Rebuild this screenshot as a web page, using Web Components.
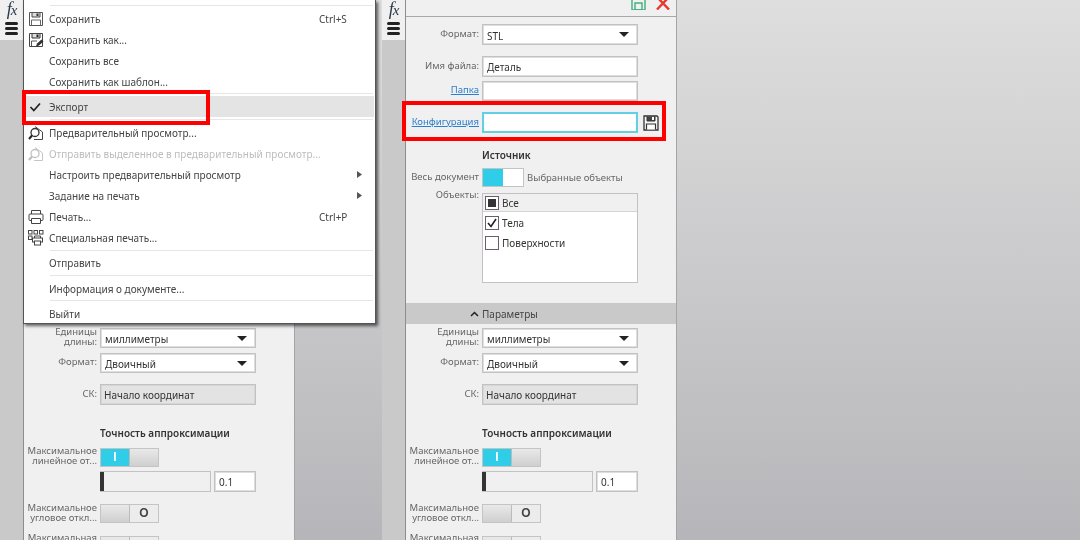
<!DOCTYPE html>
<html lang="ru">
<head>
<meta charset="utf-8">
<title>Экспорт</title>
<style>
  html, body { margin: 0; height: 540px; overflow: hidden; }
  body {
    display: flex;
    font: 10px "Noto Sans", "Open Sans", sans-serif;
    color: #3c3c3c;
    background: linear-gradient(#dedede, #b6b6ba);
  }
  svg { display: block; }
</style>
</head>
<body>

<cad-pane>
  <div slot="top" style="height:324px"></div>
  <export-params></export-params>
  <red-mark slot="over" style="--x:22px;--y:90px;--w:188px;--h:35px"></red-mark>
  <cad-menu slot="over">
    <menu-item label="Сохранить" keys="Ctrl+S"><file-icon kind="save"></file-icon></menu-item>
    <menu-item label="Сохранить как..."><file-icon kind="saveas"></file-icon></menu-item>
    <menu-item label="Сохранить все"></menu-item>
    <menu-item label="Сохранить как шаблон..."></menu-item>
    <menu-sep style="--t:1px;--b:2px"></menu-sep>
    <menu-item label="Экспорт" active><file-icon kind="check"></file-icon></menu-item>
    <menu-sep style="--t:2px;--b:2px"></menu-sep>
    <menu-item label="Предварительный просмотр..."><file-icon kind="preview"></file-icon></menu-item>
    <menu-item label="Отправить выделенное в предварительный просмотр..." disabled><file-icon kind="preview" style="opacity:.3"></file-icon></menu-item>
    <menu-item label="Настроить предварительный просмотр" sub></menu-item>
    <menu-item label="Задание на печать" sub></menu-item>
    <menu-item label="Печать..." keys="Ctrl+P"><file-icon kind="print"></file-icon></menu-item>
    <menu-item label="Специальная печать..."><file-icon kind="special"></file-icon></menu-item>
    <menu-sep style="--t:2px;--b:1px"></menu-sep>
    <menu-item label="Отправить"></menu-item>
    <menu-sep style="--t:2px;--b:2px"></menu-sep>
    <menu-item label="Информация о документе..."></menu-item>
    <menu-sep style="--t:1px;--b:2px"></menu-sep>
    <menu-item label="Выйти"></menu-item>
  </cad-menu>
</cad-pane>

<cad-pane>
  <pane-head slot="top"></pane-head>
  <form-row slot="top" label="Формат:" style="margin-top:7px"><drop-select>STL</drop-select></form-row>
  <form-row slot="top" label="Имя файла:" style="margin-top:11px"><text-box>Деталь</text-box></form-row>
  <form-row slot="top" label="Папка" link style="margin-top:4px;--h:20px;--box:20px"><text-box></text-box></form-row>
  <form-row slot="top" label="Конфигурация" link style="margin-top:11px">
    <text-box focused></text-box>
    <file-icon slot="after" kind="disk" style="margin:0 0 0 2px"></file-icon>
  </form-row>
  <sect-title slot="top" style="margin-top:14px">Источник</sect-title>
  <form-row slot="top" label="Весь документ" style="margin-top:5px;--h:19px">
    <div style="display:flex;align-items:center;gap:3px;white-space:nowrap;color:#666;font-size:9.500px">
      <flip-toggle wide></flip-toggle>Выбранные объекты
    </div>
  </form-row>
  <form-row slot="top" label="Объекты:" style="margin-top:6px;--h:90px;--align:start;--lift:-3px">
    <object-list>
      <object-row state="all" head>Все</object-row>
      <object-row state="on">Тела</object-row>
      <object-row>Поверхности</object-row>
    </object-list>
  </form-row>
  <section-bar slot="top" style="margin-top:20px">Параметры</section-bar>
  <export-params></export-params>
  <red-mark slot="over" style="--x:20px;--y:101px;--w:264px;--h:40px"></red-mark>
</cad-pane>

<script>
  // small helper, every element here is just a template + an open shadow root
  function shadow(el, html) {
    el.attachShadow({ mode: 'open' }).innerHTML = html;
    return el.shadowRoot;
  }

  class CadPane extends HTMLElement {
    constructor() {
      super();
      shadow(this, `
        <style>
          :host { display: flex; position: relative; flex: none; width: 382px; height: 540px; overflow: visible; filter: blur(.3px); }
          .side { flex: none; width: 23px; background: #c9c9c9; }
          .tools { height: 40px; background: #f0f0f0; display: flex; flex-direction: column; align-items: center; }
          .fx { height: 20px; font: italic 18px/19px "Liberation Serif", serif; color: #2b3a4a; letter-spacing: -1px; }
          .fx span { font-size: 15px; }
          .bars { display: flex; flex-direction: column; gap: 2px; margin-top: 2px; }
          .bars i { display: block; width: 13px; height: 3px; border-radius: 1.5px; background: #222; }
          .panel {
            flex: none; width: 270px; height: 540px; overflow: hidden; background: #f0f0f0;
            border-left: 1px solid #8d8d8d; border-right: 1px solid #a5a5a5;
          }
        </style>
        <div class="side">
          <div class="tools">
            <div class="fx">f<span>x</span></div>
            <div class="bars"><i></i><i></i><i></i></div>
          </div>
        </div>
        <div class="panel"><slot name="top"></slot><slot></slot></div>
        <slot name="over"></slot>`);
    }
  }

  class PaneHead extends HTMLElement {
    constructor() {
      super();
      shadow(this, `
        <style>
          :host { display: flex; height: 16px; border-bottom: 1px solid #a8a8a8; justify-content: flex-end; align-items: flex-start; gap: 10px; padding-right: 6px; overflow: hidden; }
        </style>
        <svg width="15" height="10" viewBox="0 0 15 10" fill="none" stroke="#3fae7c" stroke-width="1.4"><path d="M1 -3H14V10H1Z"/><path d="M4 3H11V10H4Z"/></svg>
        <svg width="14" height="10" viewBox="0 0 14 10" fill="none" stroke="#e8392e" stroke-width="2.4"><path d="M1 -3 13 9.500M13 -3 1 9.500"/></svg>`);
    }
  }

  class CadMenu extends HTMLElement {
    constructor() {
      super();
      shadow(this, `
        <style>
          :host {
            display: block; position: absolute; left: 23px; top: 0; width: 353px; height: 324px;
            padding-top: 8px; box-sizing: border-box; background: #fff;
            border: 1px solid #555; border-top: 0;
            box-shadow: 2px 2px 3px rgba(0, 0, 0, .6);
          }
          .topline { position: absolute; left: 26px; right: 2px; top: 5px; height: 1px; background: #e6e6e6; }
        </style>
        <div class="topline"></div>
        <slot></slot>`);
    }
  }

  class MenuItem extends HTMLElement {
    constructor() {
      super();
      const keys = this.getAttribute('keys') || '';
      const arrow = this.hasAttribute('sub') ? '<svg width="5" height="7"><path d="M0 0 5 3.500 0 7Z" fill="#555"/></svg>' : '';
      shadow(this, `
        <style>
          :host { display: flex; align-items: center; height: 21px; color: #444; }
          :host([disabled]) { color: #bdbdbd; }
          :host([active]) { background: #e4e4e4; margin: 0 1px; }
          .ico { flex: none; box-sizing: border-box; width: 25px; padding-right: 2px; display: flex; justify-content: center; }
          :host([active]) .ico { width: 24px; }
          .txt { flex: none; width: 270px; white-space: nowrap; }
          .keys { flex: none; width: 38px; }
          .arr { flex: none; width: 5px; margin-bottom: 2px; }
        </style>
        <div class="ico"><slot></slot></div>
        <div class="txt">${this.getAttribute('label')}</div>
        <div class="keys">${keys}</div>
        <div class="arr">${arrow}</div>`);
    }
  }

  class MenuSep extends HTMLElement {
    constructor() {
      super();
      shadow(this, `
        <style>
          :host { display: block; height: 1px; background: #e6e6e6; margin: var(--t) 2px var(--b) 26px; }
        </style>`);
    }
  }

  const ICONS = {
    save: '<path d="M1.500 1.500H14.500V14.500H1.500Z" fill="#fff" stroke="#555"/><path d="M4 2V6H12V2" fill="#ddd" stroke="#444"/><rect x="8.500" y="2.500" width="2" height="2.500" fill="#333"/><path d="M3.500 14V9H12.500V14" fill="none" stroke="#666"/>',
    saveas: '<path d="M1.500 1.500H14.500V14.500H1.500Z" fill="#fff" stroke="#444"/><path d="M4 2V6H12V2" fill="#ddd" stroke="#333"/><rect x="8.500" y="2.500" width="2" height="2.500" fill="#222"/><path d="M3.500 14V9H9" fill="none" stroke="#555"/><path d="M8 14.500 9 11.500 13.500 7.500 15.500 9.500 11 13.500Z" fill="#333"/>',
    check: '<path d="M2.500 8 5.800 11.500 12 4.500" fill="none" stroke="#222" stroke-width="1.700"/>',
    preview: '<path d="M7 1.500 14.500 7V14.500H6" fill="#fff" stroke="#444"/><circle cx="7" cy="7.500" r="4" fill="#fff" stroke="#333" stroke-width="1.300"/><path d="M4 10.500 1 14" stroke="#222" stroke-width="2"/>',
    print: '<path d="M3.500 5V1.500H12.500V5" fill="none" stroke="#444"/><rect x="1" y="5" width="14" height="6.500" rx="1" fill="#fff" stroke="#444"/><path d="M3.500 9.500H12.500V14.500H3.500Z" fill="#fff" stroke="#444"/>',
    special: '<g fill="none" stroke="#444"><rect x=".5" y=".5" width="3.500" height="3.500"/><rect x="6" y=".5" width="3.500" height="3.500"/><rect x="11.500" y=".5" width="3.500" height="3.500"/><rect x=".5" y="6" width="3.500" height="3.500"/><path d="M6.500 8V6H12.500V8"/><rect x="4.500" y="8" width="10" height="4" fill="#fff"/><rect x="6.500" y="11" width="6" height="4" fill="#fff"/></g>',
    disk: '<path d="M1 1H14L15 2V15H1Z" fill="#f7f7f7" stroke="#333" stroke-width="1.300"/><path d="M4 1.500V6H12V1.500" fill="#444" stroke="#333"/><rect x="9" y="2" width="2" height="3" fill="#fff"/><path d="M3.500 14.500V9H12.500V14.500" fill="#fff" stroke="#333" stroke-width="1.200"/>'
  };

  class FileIcon extends HTMLElement {
    constructor() {
      super();
      shadow(this, `
        <style>:host { display: block; width: 16px; height: 16px; }</style>
        <svg width="16" height="16" viewBox="0 0 16 16">${ICONS[this.getAttribute('kind')]}</svg>`);
    }
  }

  class FormRow extends HTMLElement {
    constructor() {
      super();
      const text = this.getAttribute('label') || '';
      const label = this.hasAttribute('link') ? `<a href="#">${text}</a>` : text;
      shadow(this, `
        <style>
          :host { display: grid; grid-template-columns: 73px 156px auto; column-gap: 3px; height: var(--h, 21px); align-items: center; }
          .lab { justify-self: end; align-self: var(--align, center); text-align: right; white-space: pre-line; font-size: 9.500px; color: #666; line-height: 10px; position: relative; top: var(--lift, -1px); }
          a { color: #2a7fd0; }
        </style>
        <div class="lab">${label}</div>
        <div class="val"><slot></slot></div>
        <slot name="after"></slot>`);
    }
  }

  const BOX = `
    :host { display: block; box-sizing: border-box; height: var(--box, 21px); border: 1px solid #c2c2c2; background: #fff; color: #333; padding: 0 4px; line-height: 20px; white-space: nowrap; outline: 1px solid #dedede; outline-offset: -2px; }`;

  class TextBox extends HTMLElement {
    constructor() {
      super();
      shadow(this, `
        <style>${BOX}
          :host([focused]) { border: 2px solid #62d0e2; outline: 0; }
          :host([grey]) { background: #e3e3e3; padding-left: 3px; outline-color: #d6d6d6; }
        </style>
        <slot></slot>`);
    }
  }

  class DropSelect extends HTMLElement {
    constructor() {
      super();
      shadow(this, `
        <style>${BOX}
          :host { display: flex; align-items: center; justify-content: space-between; padding-right: 8px; }
          span { position: relative; top: 1px; }
          i { width: 0; height: 0; border: 5px solid transparent; border-top: 5px solid #222; border-bottom: 0; }
        </style>
        <span><slot></slot></span><i></i>`);
    }
  }

  class FlipToggle extends HTMLElement {
    constructor() {
      super();
      const on = this.getAttribute('mark') === 'I';
      const off = this.getAttribute('mark') === 'O';
      shadow(this, `
        <style>
          :host { display: flex; flex: none; box-sizing: border-box; width: 59px; height: 19px; border: 1px solid #c4c4c4; }
          :host([wide]) { width: 42px; background: #fff; }
          div { flex: 1; display: flex; align-items: center; justify-content: center; font: bold 12px "Liberation Sans", sans-serif; }
          .a { background: ${on || this.hasAttribute('wide') ? '#2fcde8' : 'linear-gradient(#e9e9e9, #cfcfcf)'}; color: #fff; }
          .b { background: ${off ? '#ececec' : this.hasAttribute('wide') ? '#fff' : 'linear-gradient(#e9e9e9, #cfcfcf)'}; color: #444; border-left: ${this.hasAttribute('wide') ? 0 : '1px solid #bbb'}; }
        </style>
        <div class="a">${on ? 'I' : ''}</div><div class="b">${off ? 'O' : ''}</div>`);
    }
  }

  class ObjectList extends HTMLElement {
    constructor() {
      super();
      shadow(this, `
        <style>
          :host { display: block; box-sizing: border-box; height: 90px; border: 1px solid #c2c2c2; background: #fff; }
        </style>
        <slot></slot>`);
    }
  }

  class ObjectRow extends HTMLElement {
    constructor() {
      super();
      const state = this.getAttribute('state');
      const mark = state === 'all' ? '<i></i>'
        : state === 'on' ? '<svg width="10" height="10"><path d="M1 5 4 8.500 9 1" fill="none" stroke="#222" stroke-width="1.600"/></svg>' : '';
      shadow(this, `
        <style>
          :host { display: flex; align-items: center; gap: 3px; height: 20px; padding-left: 2px; color: #333; }
          :host([head]) { box-sizing: border-box; height: 18px; background: #f0f0f0; border-bottom: 1px solid #d4d4d4; margin-bottom: 1px; }
          b { box-sizing: border-box; width: 14px; height: 14px; border: 1px solid #6a5d6c; background: #fff; display: flex; align-items: center; justify-content: center; }
          i { width: 8px; height: 8px; background: #333; }
        </style>
        <b>${mark}</b><span><slot></slot></span>`);
    }
  }

  class SectTitle extends HTMLElement {
    constructor() {
      super();
      shadow(this, `
        <style>
          :host { display: block; height: 16px; padding-left: 76px; line-height: 16px; font-weight: 600; color: #333; white-space: nowrap; }
        </style>
        <slot></slot>`);
    }
  }

  class SectionBar extends HTMLElement {
    constructor() {
      super();
      shadow(this, `
        <style>
          :host { display: flex; align-items: center; height: 21px; background: #c9c9c9; padding-left: 64px; color: #444; gap: 3px; }
        </style>
        <svg width="9" height="6"><path d="M1 5 4.500 1.500 8 5" fill="none" stroke="#222" stroke-width="1.500"/></svg>
        <slot></slot>`);
    }
  }

  class SliderField extends HTMLElement {
    constructor() {
      super();
      shadow(this, `
        <style>
          :host { display: flex; gap: 3px; }
          .track { box-sizing: border-box; width: 111px; height: 21px; border: 1px solid #c2c2c2; border-left: 0; background: #f0f0f0; }
          .track i { display: block; width: 4px; height: 100%; background: #333; }
          text-box { width: 42px; }
        </style>
        <div class="track"><i></i></div><text-box>0.1</text-box>`);
    }
  }

  // the same parameter block sits in both panes
  class ExportParams extends HTMLElement {
    constructor() {
      super();
      shadow(this, `
        <style>
          :host { display: block; }
        </style>
        <form-row label="Единицы&#10;длины:" style="margin-top:4px;--h:20px;--box:20px"><drop-select>миллиметры</drop-select></form-row>
        <form-row label="Формат:" style="margin-top:5px;--h:20px;--box:20px"><drop-select>Двоичный</drop-select></form-row>
        <form-row label="СК:" style="margin-top:11px"><text-box grey>Начало координат</text-box></form-row>
        <sect-title style="margin-top:20px">Точность аппроксимации</sect-title>
        <form-row label="Максимальное&#10;линейное от..." style="margin-top:6px;--h:19px"><flip-toggle mark="I"></flip-toggle></form-row>
        <form-row style="margin-top:5px"><slider-field></slider-field></form-row>
        <form-row label="Максимальное&#10;угловое откл..." style="margin-top:11px;--h:19px;--lift:0"><flip-toggle mark="O"></flip-toggle></form-row>
        <form-row label="Максимальная&#10;длина ребра" style="margin-top:13px;--h:19px;--lift:-2px"><flip-toggle mark="O"></flip-toggle></form-row>`);
    }
  }

  // red annotation frames drawn over the screenshot
  class RedMark extends HTMLElement {
    constructor() {
      super();
      shadow(this, `
        <style>
          :host { position: absolute; z-index: 5; left: var(--x); top: var(--y); width: var(--w); height: var(--h); box-sizing: border-box; border: 4px solid #f00; }
        </style>`);
    }
  }

  customElements.define('text-box', TextBox);
  customElements.define('drop-select', DropSelect);
  customElements.define('flip-toggle', FlipToggle);
  customElements.define('slider-field', SliderField);
  customElements.define('form-row', FormRow);
  customElements.define('sect-title', SectTitle);
  customElements.define('section-bar', SectionBar);
  customElements.define('object-list', ObjectList);
  customElements.define('object-row', ObjectRow);
  customElements.define('file-icon', FileIcon);
  customElements.define('menu-item', MenuItem);
  customElements.define('menu-sep', MenuSep);
  customElements.define('cad-menu', CadMenu);
  customElements.define('pane-head', PaneHead);
  customElements.define('red-mark', RedMark);
  customElements.define('export-params', ExportParams);
  customElements.define('cad-pane', CadPane);
</script>
</body>
</html>
